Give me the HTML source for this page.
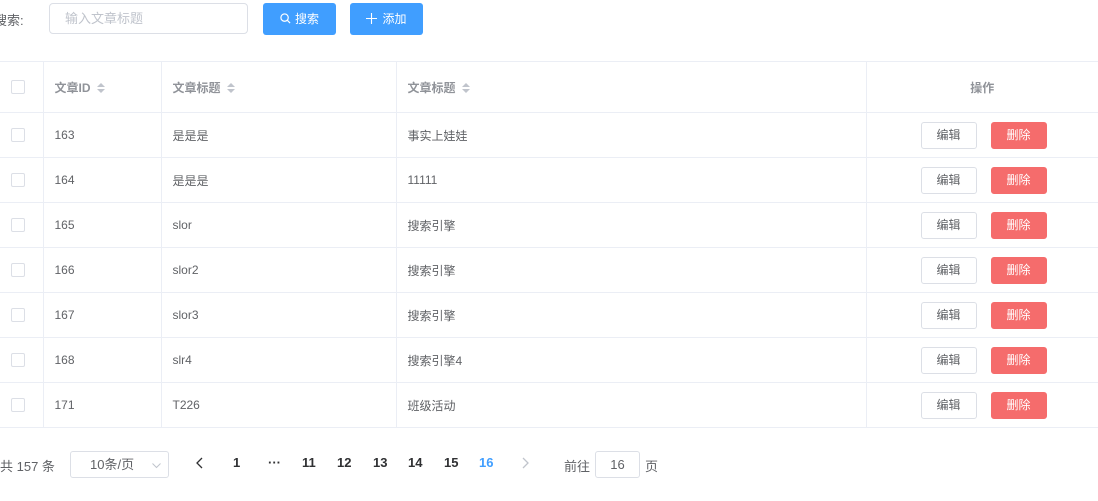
<!DOCTYPE html><html><head><meta charset="utf-8"><style>
body{margin:0;width:1098px;height:501px;overflow:hidden;background:#fff;font-family:"Liberation Sans","Noto Sans CJK SC",sans-serif;font-size:12px;color:#606266;position:relative}
.a{position:absolute}
.btn{position:absolute;border-radius:3px;box-sizing:border-box;text-align:center;font-size:12px}
.pri{background:#409eff;color:#fff;height:32px;top:3px;line-height:32px}
table{position:absolute;left:0;top:61px;width:1098px;border-collapse:collapse;table-layout:fixed}
td,th{border-bottom:1px solid #ebeef5;border-right:1px solid #ebeef5;height:45px;padding:0 0 0 11px;text-align:left;font-weight:normal;box-sizing:border-box;vertical-align:middle}
th{height:51px;color:#909399;font-weight:bold;border-top:1px solid #ebeef5}
tr td:last-child,tr th:last-child{border-right:none}
.cb{display:inline-block;width:12px;height:12px;border:1px solid #dcdfe6;border-radius:2px;background:#fff;vertical-align:middle}
.sort{display:inline-block;vertical-align:middle;margin-left:6px;width:8px;height:1px;position:relative;top:-1px}
.sort:before{content:"";position:absolute;border:4px solid transparent;border-bottom-color:#c0c4cc;top:-8px;left:0}
.sort:after{content:"";position:absolute;border:4px solid transparent;border-top-color:#c0c4cc;top:2px;left:0}
.e,.d{display:inline-block;width:56px;height:27px;line-height:25px;box-sizing:border-box;border-radius:3px;text-align:center;vertical-align:middle}
.e{border:1px solid #dcdfe6;color:#606266;margin-left:43px}
.d{background:#f56c6c;border:1px solid #f56c6c;color:#fff;margin-left:14px}
.pg{position:absolute;top:455px;font-weight:bold;color:#303133;font-size:13px}
.ar{position:absolute;top:457px}
</style></head><body>
<div class="a" style="left:-6px;top:10px;font-size:13px;color:#606266">搜索:</div>
<div class="a" style="left:49px;top:3px;width:199px;height:31px;border:1px solid #dcdfe6;border-radius:4px;box-sizing:border-box;color:#c0c4cc;line-height:29px;padding-left:15px;font-size:13px">输入文章标题</div>
<div class="btn pri" style="left:263px;width:73px"><svg width="11" height="11" viewBox="0 0 12 12" style="vertical-align:-1px;margin-right:4px"><circle cx="5" cy="5" r="4" fill="none" stroke="#fff" stroke-width="1.3"/><path d="M8 8l3 3" stroke="#fff" stroke-width="1.3"/></svg>搜索</div>
<div class="btn pri" style="left:350px;width:73px"><svg width="11" height="11" viewBox="0 0 12 12" style="vertical-align:-1px;margin-right:5px"><path d="M6 0v12M0 6h12" stroke="#fff" stroke-width="1.2"/></svg>添加</div>
<table>
<colgroup><col style="width:43px"><col style="width:118px"><col style="width:235px"><col style="width:470px"><col></colgroup>
<tr><th><span class="cb"></span></th><th>文章ID<span class="sort"></span></th><th>文章标题<span class="sort"></span></th><th>文章标题<span class="sort"></span></th><th style="text-align:center;padding:0">操作</th></tr>
<tr><td><span class="cb"></span></td><td>163</td><td>是是是</td><td>事实上娃娃</td><td><span class="e">编辑</span><span class="d">删除</span></td></tr>
<tr><td><span class="cb"></span></td><td>164</td><td>是是是</td><td>11111</td><td><span class="e">编辑</span><span class="d">删除</span></td></tr>
<tr><td><span class="cb"></span></td><td>165</td><td>slor</td><td>搜索引擎</td><td><span class="e">编辑</span><span class="d">删除</span></td></tr>
<tr><td><span class="cb"></span></td><td>166</td><td>slor2</td><td>搜索引擎</td><td><span class="e">编辑</span><span class="d">删除</span></td></tr>
<tr><td><span class="cb"></span></td><td>167</td><td>slor3</td><td>搜索引擎</td><td><span class="e">编辑</span><span class="d">删除</span></td></tr>
<tr><td><span class="cb"></span></td><td>168</td><td>slr4</td><td>搜索引擎4</td><td><span class="e">编辑</span><span class="d">删除</span></td></tr>
<tr><td><span class="cb"></span></td><td>171</td><td>T226</td><td>班级活动</td><td><span class="e">编辑</span><span class="d">删除</span></td></tr>
</table>
<div class="a" style="left:0;top:456px;font-size:13px">共 157 条</div>
<div class="a" style="left:70px;top:451px;width:99px;height:27px;border:1px solid #dcdfe6;border-radius:3px;box-sizing:border-box;line-height:25px;padding-left:19px;font-size:13px">10条/页<svg width="9" height="6" viewBox="0 0 9 6" style="position:absolute;right:7px;top:11px"><path d="M0.5 0.5l4 4 4-4" fill="none" stroke="#c0c4cc"/></svg></div>
<svg class="ar" style="left:196px" width="7" height="12" viewBox="0 0 7 12"><path d="M6 1L1 6l5 5" fill="none" stroke="#303133" stroke-width="1.3"/></svg>
<div class="pg" style="left:233px">1</div>
<div class="pg" style="left:268px">···</div>
<div class="pg" style="left:302px">11</div>
<div class="pg" style="left:337px">12</div>
<div class="pg" style="left:373px">13</div>
<div class="pg" style="left:408px">14</div>
<div class="pg" style="left:444px">15</div>
<div class="pg" style="left:479px;color:#409eff">16</div>
<svg class="ar" style="left:522px" width="7" height="12" viewBox="0 0 7 12"><path d="M1 1l5 5-5 5" fill="none" stroke="#c0c4cc" stroke-width="1.3"/></svg>
<div class="a" style="left:564px;top:456px;font-size:13px">前往</div>
<div class="a" style="left:595px;top:451px;width:45px;height:27px;border:1px solid #dcdfe6;border-radius:3px;box-sizing:border-box;text-align:center;line-height:25px;font-size:13px">16</div>
<div class="a" style="left:645px;top:456px;font-size:13px">页</div>
</body></html>
